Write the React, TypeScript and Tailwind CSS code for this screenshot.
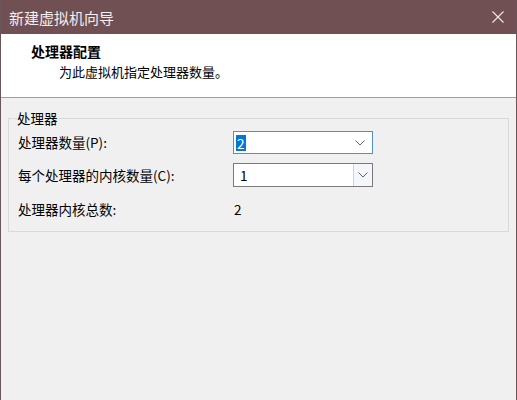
import React from "react";

const FONT = {
  fontFamily: '"Noto Sans CJK SC", "Noto Sans", "Liberation Sans", sans-serif',
};

function Chevron() {
  return (
    <svg width="10" height="6" viewBox="0 0 10 6" className="block">
      <polyline points="0.5,0.5 5,5 9.5,0.5" fill="none" stroke="#606060" strokeWidth="1" />
    </svg>
  );
}

function ComboSelected({ value }: { value: string }) {
  return (
    <div className="w-[140px] h-[23px] border border-[#4f91c9] bg-white flex items-center justify-between pl-[2px] pr-[7px]">
      <span className="bg-[#0078d7] text-white leading-[16px] px-[1px]">{value}</span>
      <Chevron />
    </div>
  );
}

function ComboEditable({ value }: { value: string }) {
  return (
    <div className="w-[140px] h-[24px] border border-[#7a7a7a] bg-white flex">
      <div className="flex-1 flex items-center pl-[6px]">{value}</div>
      <div className="w-[19px] border-l border-[#c9d6e2] bg-[#f3f7fb] flex items-center justify-center">
        <Chevron />
      </div>
    </div>
  );
}

export default function App() {
  return (
    <div
      className="w-[517px] h-[400px] bg-[#f0f0f0] border-l border-r border-[#6a5558] flex flex-col text-[13px] leading-[17px] text-black overflow-hidden"
      style={FONT}
    >
      {/* title bar */}
      <div className="h-[34px] shrink-0 bg-[#705053] text-[#f4eeee] text-[15px] flex items-center justify-between pl-[8px] pr-[12px]">
        <span>新建虚拟机向导</span>
        <svg width="12" height="12" viewBox="0 0 12 12">
          <path d="M0.5 0.5 L11.5 11.5 M11.5 0.5 L0.5 11.5" stroke="#f4e6e6" strokeWidth="1.1" />
        </svg>
      </div>

      {/* header */}
      <div className="h-[64px] shrink-0 bg-white border-b border-[#a0a0a0] pl-[30px] pt-[8px]">
        <div className="font-bold text-[14px] leading-[18px]">处理器配置</div>
        <div className="pl-[28px] mt-[3px]">为此虚拟机指定处理器数量。</div>
      </div>

      {/* group box */}
      <fieldset className="mt-[12px] mx-[7px] border border-[#d9d9d9] px-[9px] pt-[4px] pb-[13px] text-[13.5px]">
        <legend className="-ml-[1px] px-0 pr-[1px]">处理器</legend>
        <div className="grid grid-cols-[215px_1fr] items-center">
          <div>处理器数量(P):</div>
          <ComboSelected value="2" />
          <div className="mt-[9px]">每个处理器的内核数量(C):</div>
          <div className="mt-[9px]">
            <ComboEditable value="1" />
          </div>
          <div className="mt-[14px]">处理器内核总数:</div>
          <div className="mt-[14px] pl-[1px]">2</div>
        </div>
      </fieldset>
    </div>
  );
}
